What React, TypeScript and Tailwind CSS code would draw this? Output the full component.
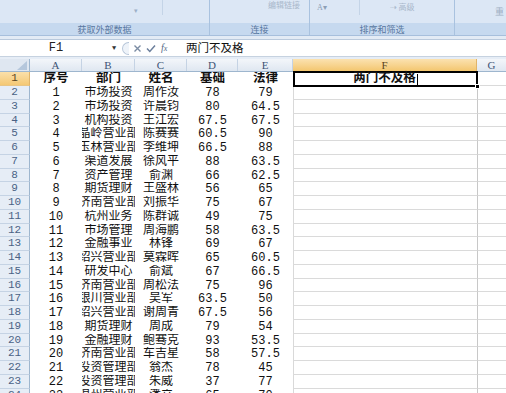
import React from "react";

const data: string[][] = [
  ["1", "市场投资", "周作汝", "78", "79"],
  ["2", "市场投资", "许晨钧", "80", "64.5"],
  ["3", "机构投资", "王江宏", "67.5", "67.5"],
  ["4", "晶岭营业部", "陈赛赛", "60.5", "90"],
  ["5", "玉林营业部", "李维坤", "66.5", "88"],
  ["6", "渠道发展", "徐风平", "88", "63.5"],
  ["7", "资产管理", "俞渊", "66", "62.5"],
  ["8", "期货理财", "王盛林", "56", "65"],
  ["9", "济南营业部", "刘振华", "75", "67"],
  ["10", "杭州业务", "陈群诚", "49", "75"],
  ["11", "市场管理", "周海鹏", "58", "63.5"],
  ["12", "金融事业", "林锋", "69", "67"],
  ["13", "绍兴营业部", "莫霖晖", "65", "60.5"],
  ["14", "研发中心", "俞斌", "67", "66.5"],
  ["15", "济南营业部", "周松法", "75", "96"],
  ["16", "银川营业部", "吴军", "63.5", "50"],
  ["17", "绍兴营业部", "谢周青", "67.5", "56"],
  ["18", "期货理财", "周成", "79", "54"],
  ["19", "金融理财", "鲍骞克", "93", "53.5"],
  ["20", "济南营业部", "车吉星", "58", "57.5"],
  ["21", "投资管理部", "翁杰", "78", "45"],
  ["22", "投资管理部", "朱威", "37", "77"],
  ["23", "温州营业部", "潘立", "65", "70"],
];

const widths = ["w-[52px]", "w-[53px]", "w-[52px]", "w-[51px]", "w-[55px]"];

function rowTop(n: number) {
  return 86 + Math.round((n - 2) * 13.75);
}

function DataCell({ w, text, bold }: { w: string; text: string; bold?: boolean }) {
  return (
    <div
      className={`${w} shrink-0 h-full overflow-hidden flex items-center justify-center whitespace-nowrap text-[#111] ${
        bold ? "font-bold text-[12.5px]" : "text-[12px]"
      }`}
    >
      {text}
    </div>
  );
}

function Ribbon() {
  return (
    <div className="h-[35px] shrink-0 flex bg-[#d6e4f4] text-[#5877a0] font-['Noto_Sans_CJK_SC',sans-serif]">
      <div className="w-[210px] shrink-0 flex flex-col border-r border-[#a9c2df]">
        <div className="flex-1 bg-[#dce7f5] flex items-start">
          <div className="ml-[134px] mt-[5px] text-[7px] text-[#9cb0c8]">▾</div>
          <div className="ml-[24px] w-px h-[15px] bg-[#c4d4e7]" />
        </div>
        <div className="h-[12px] shrink-0 bg-[#c6d9ef] flex items-center justify-center text-[9px] leading-none">获取外部数据</div>
      </div>
      <div className="w-[100px] shrink-0 flex flex-col border-r border-[#a9c2df]">
        <div className="flex-1 bg-[#dce7f5] flex items-start">
          <div className="ml-[58px] mt-[1px] text-[8px] text-[#a9b8cb] leading-none">编辑链接</div>
        </div>
        <div className="h-[12px] shrink-0 bg-[#c6d9ef] flex items-center justify-center text-[9px] leading-none">连接</div>
      </div>
      <div className="w-[145px] shrink-0 flex flex-col border-r border-[#a9c2df]">
        <div className="flex-1 bg-[#dce7f5] flex items-start">
          <div className="ml-[7px] mt-[4px] text-[8px] text-[#8d9fb6] leading-none font-['Liberation_Serif',serif]">A▾</div>
          <div className="ml-[32px] w-px h-[15px] bg-[#c4d4e7]" />
          <div className="ml-[30px] mt-[3px] text-[8px] text-[#a9b8cb] leading-none">⇢ 高级</div>
        </div>
        <div className="h-[12px] shrink-0 bg-[#c6d9ef] flex items-center justify-center text-[9px] leading-none">排序和筛选</div>
      </div>
      <div className="flex-1 flex flex-col">
        <div className="flex-1 bg-[#dce7f5] flex items-start justify-end">
          <div className="mt-[7px] mr-[2px] text-[9px] text-[#a0b0c4] leading-none">重</div>
        </div>
        <div className="h-[12px] shrink-0 bg-[#c6d9ef]" />
      </div>
    </div>
  );
}

function FormulaBar() {
  return (
    <div className="h-[17px] shrink-0 flex items-center bg-white border-t border-[#b9c9dc]">
      <div className="w-[112px] shrink-0 text-center text-[12px] text-[#222] font-['Liberation_Mono',monospace] leading-none">F1</div>
      <div className="w-[10px] shrink-0 text-[7px] text-[#333] leading-none">▼</div>
      <div className="w-[62px] shrink-0 h-[15px] flex items-center">
        <div className="w-[7px] h-[13px] rounded-l-full border border-r-0 border-[#b7c6d9] bg-[#eef3f9]" />
        <div className="ml-[4px] text-[#7b8ca3]">
          <svg width="9" height="9" viewBox="0 0 9 9">
            <path d="M1.5 1.5 L7.5 7.5 M7.5 1.5 L1.5 7.5" stroke="currentColor" strokeWidth="1.4" />
          </svg>
        </div>
        <div className="ml-[4px] text-[#6b7f9c]">
          <svg width="10" height="9" viewBox="0 0 10 9">
            <path d="M1 4.5 L3.8 7.5 L9 1.5" stroke="currentColor" strokeWidth="1.5" fill="none" />
          </svg>
        </div>
        <div className="ml-[5px] text-[10px] italic text-[#556a88] font-['Liberation_Serif',serif] leading-none">
          f<span className="text-[8px]">x</span>
        </div>
      </div>
      <div className="pl-[2px] text-[11.5px] text-[#111] font-['Noto_Sans_CJK_SC',sans-serif] leading-none">两门不及格</div>
    </div>
  );
}

function ColHeader() {
  const base = "shrink-0 h-full flex items-center justify-center border-r border-[#c5d3e4] bg-gradient-to-b from-[#f3f6fa] to-[#dfe7f1] text-[#3d5375]";
  return (
    <div className="h-[13px] shrink-0 flex border-b border-[#9eb6ce] text-[11px] font-['Liberation_Serif',serif] leading-none">
      <div className="w-[30px] shrink-0 h-full relative border-r border-[#9eb6ce] bg-[#dfe7f1]">
        <div className="absolute right-[2px] bottom-[1px] w-0 h-0 border-l-[10px] border-l-transparent border-b-[9px] border-b-[#b5c7dc]" />
      </div>
      <div className={`w-[52px] ${base}`}>A</div>
      <div className={`w-[53px] ${base}`}>B</div>
      <div className={`w-[52px] ${base}`}>C</div>
      <div className={`w-[51px] ${base}`}>D</div>
      <div className={`w-[55px] ${base}`}>E</div>
      <div className="w-[184px] shrink-0 h-full flex items-center justify-center border-r border-[#e0b46a] bg-gradient-to-b from-[#fbe2b0] to-[#f3c66e] text-[#5a4520]">F</div>
      <div className={`flex-1 ${base} border-r-0`}>G</div>
    </div>
  );
}

function RowHead({ n, selected }: { n: number; selected?: boolean }) {
  return (
    <div
      className={`w-[30px] shrink-0 h-full flex items-center justify-center border-r border-b text-[11px] font-['Liberation_Mono',monospace] leading-none ${
        selected
          ? "bg-gradient-to-b from-[#fbe0aa] to-[#f4c873] border-r-[#e0b46a] border-b-[#e8c585] text-[#5a4520]"
          : "bg-[#e6edf6] border-r-[#9eb6ce] border-b-[#c5d3e4] text-[#4a6285]"
      }`}
    >
      {n}
    </div>
  );
}

export default function App() {
  return (
    <div className="w-[506px] h-[393px] overflow-hidden bg-white flex flex-col font-['Liberation_Mono','Noto_Sans_CJK_SC',monospace]">
      <Ribbon />
      <div className="h-[4px] shrink-0 bg-[#e3ebf5] border-t border-[#a7bfdc]" />
      <FormulaBar />
      <div className="h-[3px] shrink-0 bg-[#e6edf6] border-t border-[#c6d2e0]" />
      <ColHeader />
      <div className="h-[14px] shrink-0 flex">
        <RowHead n={1} selected />
        <DataCell w={widths[0]} text="序号" bold />
        <DataCell w={widths[1]} text="部门" bold />
        <DataCell w={widths[2]} text="姓名" bold />
        <DataCell w={widths[3]} text="基础" bold />
        <DataCell w={widths[4]} text="法律" bold />
        <div className="w-[184px] shrink-0 h-full relative border-l border-[#d9d9d9]">
          <div className="absolute -left-[1px] -top-[1px] -right-[1px] -bottom-[1px] border-2 border-black flex items-center justify-center">
            <span className="text-[12.5px] font-bold text-[#111] whitespace-nowrap">两门不及格</span>
            <span className="w-px h-[11px] bg-black ml-[1px]" />
          </div>
          <div className="absolute -right-[3px] -bottom-[3px] w-[5px] h-[5px] bg-black border border-white" />
        </div>
        <div className="flex-1 h-full border-l border-[#c8c8c8] border-b border-b-[#dadada]" />
      </div>
      {data.map((r, i) => {
        const n = i + 2;
        const h = rowTop(n + 1) - rowTop(n);
        return (
          <div key={n} className={`${h === 13 ? "h-[13px]" : "h-[14px]"} shrink-0 flex`}>
            <RowHead n={n} />
            {r.map((t, j) => (
              <DataCell key={j} w={widths[j]} text={t} />
            ))}
            <div className="w-[184px] shrink-0 h-full border-l border-[#d9d9d9] border-b border-b-[#dadada]" />
            <div className="flex-1 h-full border-l border-[#c8c8c8] border-b border-b-[#dadada]" />
          </div>
        );
      })}
    </div>
  );
}
